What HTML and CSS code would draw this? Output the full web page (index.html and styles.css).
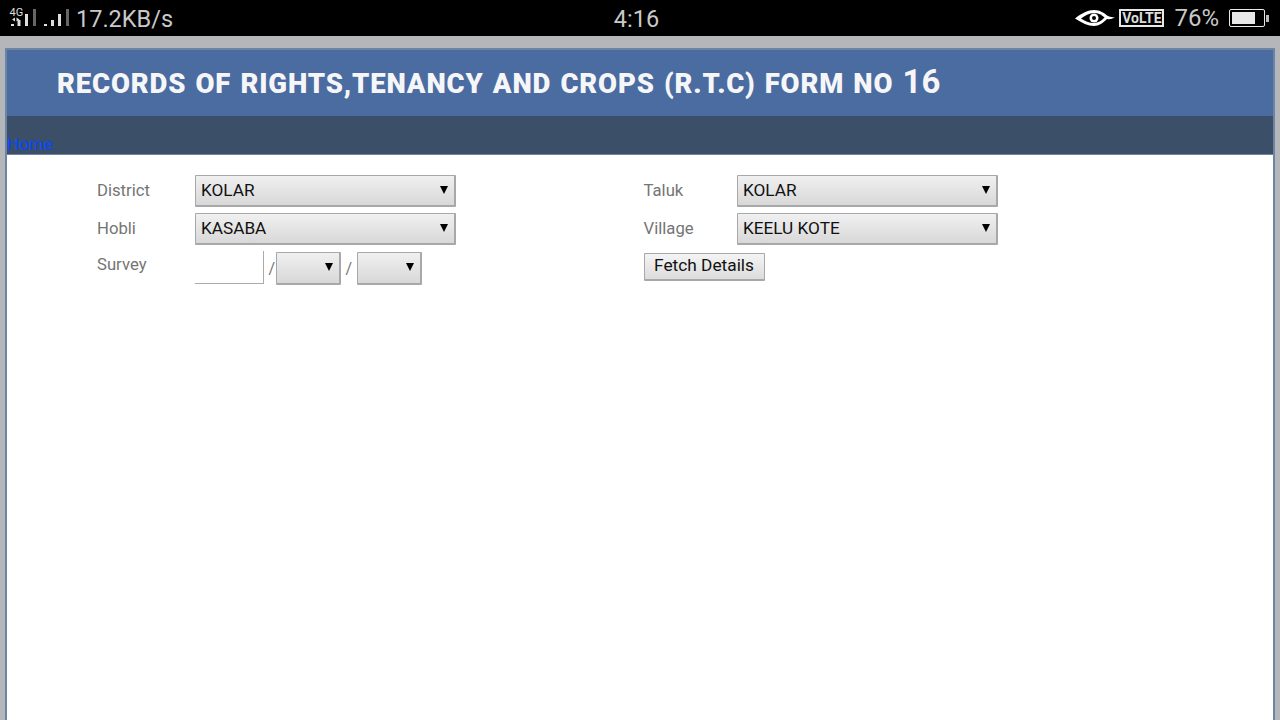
FILE: index.html
```html
<!DOCTYPE html>
<html lang="en">
  <head>
    <meta charset="UTF-8" />
    <meta name="viewport" content="width=device-width, initial-scale=1.0" />
    <title>RTC Form 16</title>
    <link rel="stylesheet" href="styles.css">
  </head>
  <body>
    <div class="statusbar">
      <div class="status-left">
        <svg class="signal" width="70" height="36" viewBox="0 0 70 36">
          <text x="9.500" y="16" class="net-label">4G</text>
          <path d="M15 17.500v4l-3-2zM16.500 17.500v4l3-2z" fill="#ddd"/>
          <rect x="11" y="24" width="3" height="2" fill="#ddd"/>
          <rect x="17.500" y="20" width="3" height="6" fill="#ddd"/>
          <rect x="25" y="14" width="3" height="12" fill="#ddd"/>
          <rect x="33" y="9" width="3" height="17" fill="#666"/>
          <rect x="44" y="24" width="3" height="2" fill="#ddd"/>
          <rect x="51" y="20" width="3" height="6" fill="#ddd"/>
          <rect x="58" y="14" width="3" height="12" fill="#ddd"/>
          <rect x="66" y="9" width="3" height="17" fill="#666"/>
        </svg>
        <span class="speed">17.2KB/s</span>
      </div>
      <div class="clock">4:16</div>
      <div class="status-right">
        <svg class="eye" width="40" height="18" viewBox="0 0 40 18">
          <path d="M0 9.500C7 4 13 1 19 1c6 0 10 3 14 6 2 1 4 1.500 7 1-3 2-5 2.500-8 2-4 4-8 7-13 7-6 0-12-3-19-7.500z" fill="#fff"/>
          <path d="M6 9.500c4-3 8-5.500 13-5.500 4 0 8 2 10.500 4.500-3 3-6.500 5.500-10.500 5.500-5 0-9-2-13-4.500z" fill="#000"/>
          <circle cx="19" cy="9" r="4.500" fill="#fff"/>
          <circle cx="19" cy="9" r="2" fill="#000"/>
        </svg>
        <span class="volte">VoLTE</span>
        <span class="percent">76%</span>
        <div class="battery"><div class="battery-level"></div></div>
        <div class="battery-tip"></div>
      </div>
    </div>

    <div class="page">
      <header class="banner">
        <h1>RECORDS OF RIGHTS,TENANCY AND CROPS (R.T.C) FORM NO <span class="form-no">16</span></h1>
      </header>
      <nav class="menu"><a href="#">Home</a></nav>
      <main class="content">
        <div class="form-col left-col">
          <label>District</label>
          <div class="select-box wide">KOLAR</div>
          <label>Hobli</label>
          <div class="select-box wide">KASABA</div>
          <label class="survey-label">Survey</label>
          <div class="survey">
            <input type="text" class="survey-input">
            <span class="slash">/</span>
            <div class="select-box small"></div>
            <span class="slash">/</span>
            <div class="select-box small"></div>
          </div>
        </div>
        <div class="form-col right-col">
          <label>Taluk</label>
          <div class="select-box wide">KOLAR</div>
          <label>Village</label>
          <div class="select-box wide">KEELU KOTE</div>
          <button class="fetch-btn">Fetch Details</button>
        </div>
      </main>
    </div>
  </body>
</html>
```

FILE: styles.css
```css
* {
  box-sizing: border-box;
  margin: 0;
  padding: 0;
}

html,
body {
  height: 720px;
  overflow: hidden;
}

body {
  font-family: Roboto, Arial, sans-serif;
  background-color: #b5b6ba;
}

.statusbar {
  height: 36px;
  background-color: #000;
  color: #c9c9c9;
  display: grid;
  grid-template-columns: 1fr auto 1fr;
  align-items: center;
  padding: 0 11px 0 0;
}

.status-left {
  display: flex;
  align-items: center;
}

.signal {
  flex-shrink: 0;
}

.net-label {
  font-size: 11px;
  fill: #ddd;
}

.speed {
  font-size: 23.500px;
  margin-left: 6px;
  padding-top: 1px;
}

.clock {
  font-size: 23.500px;
  margin-left: 4px;
  padding-top: 1px;
}

.status-right {
  display: flex;
  align-items: center;
  justify-content: flex-end;
}

.eye {
  margin-right: 4px;
  margin-top: -1px;
}

.volte {
  border: 2px solid #e8e8e8;
  color: #ddd;
  font-size: 14px;
  font-weight: bold;
  line-height: 14px;
  height: 18px;
  width: 45px;
  text-align: center;
}

.percent {
  font-size: 24px;
  margin-left: 10px;
}

.battery {
  width: 36px;
  height: 18px;
  border: 1px solid #e8e8e8;
  border-radius: 2px;
  padding: 2px;
  margin-left: 10px;
}

.battery-level {
  width: 76%;
  height: 100%;
  background-color: #e8e8e8;
}

.battery-tip {
  width: 3px;
  height: 7px;
  background-color: #bbb;
  margin-left: 1px;
}

.page {
  margin: 12px 5px 0;
  height: 672px;
  border: 2px solid #6d84a2;
  border-bottom: none;
  background-color: #fff;
}

.banner {
  height: 66px;
  background-color: #4a6ca0;
  color: #f6f6f8;
  padding: 0 0 3px 50px;
  display: flex;
  align-items: center;
}

.banner h1 {
  font-size: 27.500px;
  font-weight: 900;
  letter-spacing: 0.850px;
  word-spacing: 1.500px;
}

.form-no {
  font-size: 33px;
  font-weight: 700;
  letter-spacing: 0;
}

.menu {
  height: 39px;
  background-color: #3b5068;
  border-bottom: 1px solid #6d84a2;
  font-size: 17px;
  line-height: 21px;
  padding-top: 18px;
}

.menu a {
  color: #0648ff;
  text-decoration: none;
}

.content {
  display: flex;
  font-size: 17.200px;
  padding-top: 20px;
}

.form-col {
  display: grid;
  align-items: center;
  row-gap: 6px;
  grid-auto-rows: 32px;
}

.left-col {
  margin-left: 90px;
  width: 546.500px;
  grid-template-columns: 98px 1fr;
}

.right-col {
  grid-template-columns: 93.500px 1fr;
}

label {
  color: #757575;
  font-size: 16.700px;
  margin-top: -2px;
}

.survey-label {
  margin-top: -5px;
}

.select-box {
  position: relative;
  height: 32px;
  line-height: 29px;
  padding-left: 5px;
  color: #111;
  border: 1px solid #a8a8a8;
  border-bottom-width: 2px;
  border-right-width: 2px;
  border-radius: 1px;
  background: linear-gradient(#f0f0f0, #d8d8d8);
}

.select-box::after {
  content: "";
  position: absolute;
  right: 6px;
  top: 10px;
  border-left: 4px solid transparent;
  border-right: 4px solid transparent;
  border-top: 8px solid #000;
}

.wide {
  width: 261px;
}

.small {
  width: 65px;
  height: 33px;
}

.survey {
  display: flex;
  align-items: center;
  margin-top: 2px;
}

.survey-input {
  width: 69px;
  height: 33px;
  margin-top: -1px;
  border: none;
  border-right: 1px solid #aaa;
  border-bottom: 1px solid #aaa;
  background-color: #fff;
}

.slash {
  color: #777;
  width: 11px;
  margin-right: 1px;
  font-size: 16px;
  text-align: right;
}

.small + .slash {
  width: 11px;
  margin-right: 5px;
}

.fetch-btn {
  grid-column: 1 / 3;
  justify-self: start;
  width: 121px;
  height: 28px;
  padding-bottom: 2px;
  font-family: Roboto, Arial, sans-serif;
  font-size: 17.300px;
  color: #111;
  border: 1px solid #a8a8a8;
  border-bottom-width: 2px;
  border-radius: 1px;
  background: linear-gradient(#f4f4f4, #dcdcdc);
  margin-top: -1px;
}
```
